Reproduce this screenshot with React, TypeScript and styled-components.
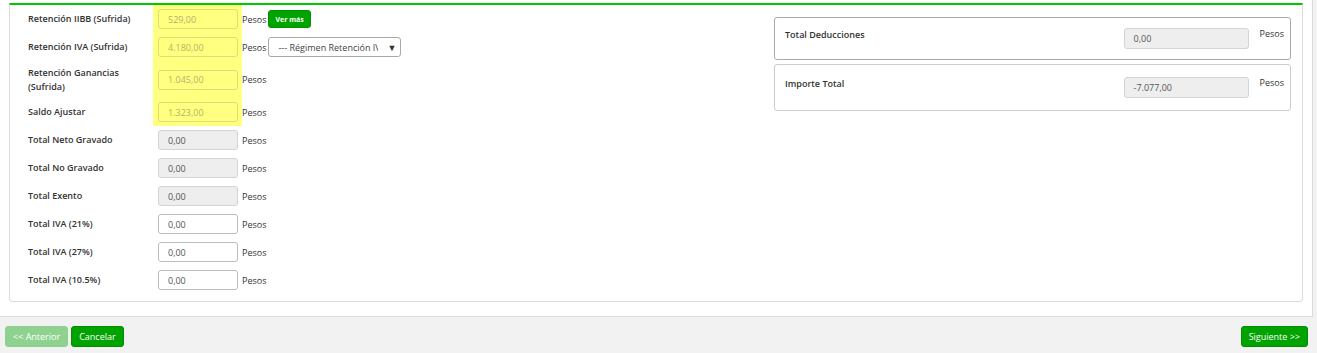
import { createGlobalStyle } from 'styled-components';
import styled from 'styled-components';

type Field = {
    label: string;
    value: string;
    kind: 'marked' | 'readonly' | 'edit';
    tall?: boolean;
    extra?: 'more' | 'regimen';
};

const fields: Field[] = [
    { label: 'Retención IIBB (Sufrida)', value: '529,00', kind: 'marked', extra: 'more' },
    { label: 'Retención IVA (Sufrida)', value: '4.180,00', kind: 'marked', extra: 'regimen' },
    { label: 'Retención Ganancias (Sufrida)', value: '1.045,00', kind: 'marked', tall: true },
    { label: 'Saldo Ajustar', value: '1.323,00', kind: 'marked' },
    { label: 'Total Neto Gravado', value: '0,00', kind: 'readonly' },
    { label: 'Total No Gravado', value: '0,00', kind: 'readonly' },
    { label: 'Total Exento', value: '0,00', kind: 'readonly' },
    { label: 'Total IVA (21%)', value: '0,00', kind: 'edit' },
    { label: 'Total IVA (27%)', value: '0,00', kind: 'edit' },
    { label: 'Total IVA (10.5%)', value: '0,00', kind: 'edit' },
];

const totals = [
    { label: 'Total Deducciones', value: '0,00', active: true },
    { label: 'Importe Total', value: '-7.077,00', active: false },
];

export default function App(): JSX.Element {
    return (
        <>
            <GlobalStyle />
            <Page>
                <Sheet>
                    <Panel>
                        <LeftColumn>
                            {fields.map((field) => (
                                <Row key={field.label} tall={field.tall}>
                                    <Label>{field.label}</Label>
                                    <InputCell marked={field.kind === 'marked'}>
                                        <Input kind={field.kind}>{field.value}</Input>
                                    </InputCell>
                                    <Unit>Pesos</Unit>
                                    {field.extra === 'more' && <SmallButton>Ver más</SmallButton>}
                                    {field.extra === 'regimen' && (
                                        <FakeSelect>
                                            <SelectText>--- Régimen Retención IV</SelectText>
                                            <SelectArrow>▼</SelectArrow>
                                        </FakeSelect>
                                    )}
                                </Row>
                            ))}
                        </LeftColumn>
                        <RightColumn>
                            {totals.map((t) => (
                                <TotalBox key={t.label} active={t.active}>
                                    <TotalLabel>{t.label}</TotalLabel>
                                    <TotalInput>{t.value}</TotalInput>
                                    <TotalUnit>Pesos</TotalUnit>
                                </TotalBox>
                            ))}
                        </RightColumn>
                    </Panel>
                </Sheet>
                <Footer>
                    <NavGroup>
                        <NavButton disabled>&lt;&lt; Anterior</NavButton>
                        <NavButton>Cancelar</NavButton>
                    </NavGroup>
                    <NavButton>Siguiente &gt;&gt;</NavButton>
                </Footer>
            </Page>
        </>
    );
}

const GlobalStyle = createGlobalStyle`
    body {
        margin: 0;
        background: #f1f2f1;
        font-family: "Open Sans", "Liberation Sans", sans-serif;
        color: #333;
    }
`;

const Page = styled.div`
    width: 1317px;
    height: 353px;
    background: #f1f2f1;
`;

const Sheet = styled.div`
    background: #fff;
    width: 1313px;
    height: 317px;
    box-sizing: border-box;
    border-right: 1px solid #dcdcdc;
    border-bottom: 1px solid #dcdcdc;
    padding: 3px 0 0 9px;
`;

const Panel = styled.div`
    width: 1294px;
    box-sizing: border-box;
    border: 1px solid #dcdcdc;
    border-top: 2px solid #00c800;
    border-radius: 0 0 4px 4px;
    padding: 0 11px 7px 18px;
    display: grid;
    grid-template-columns: 1fr 517px;
    align-items: start;
`;

const LeftColumn = styled.div`
    display: flex;
    flex-direction: column;
`;

const Row = styled.div<{ tall?: boolean }>`
    display: flex;
    align-items: center;
    height: ${(props) => (props.tall ? '37px' : '28px')};
`;

const Label = styled.div`
    width: 125px;
    font-size: 9px;
    font-weight: 600;
    line-height: 14px;
    color: #333;
`;

const InputCell = styled.div<{ marked?: boolean }>`
    align-self: stretch;
    display: flex;
    align-items: center;
    padding: 0 4px 0 5px;
    background: ${(props) => (props.marked ? '#ffff80' : 'transparent')};
`;

const Input = styled.div<{ kind: Field['kind'] }>`
    width: 80px;
    height: 20px;
    box-sizing: border-box;
    padding: 0 9px;
    display: flex;
    align-items: center;
    font-size: 9px;
    border-radius: 3px;
    border: 1px solid
        ${(props) => (props.kind === 'marked' ? '#dede76' : props.kind === 'readonly' ? '#d4d4d4' : '#bdbdbd')};
    background: ${(props) =>
        props.kind === 'marked' ? '#ffff80' : props.kind === 'readonly' ? '#eeeeee' : '#fff'};
    color: ${(props) => (props.kind === 'marked' ? '#b3b36a' : '#555')};
`;

const Unit = styled.span`
    font-size: 9px;
    color: #333;
    margin-right: 2px;
`;

const SmallButton = styled.button`
    height: 18px;
    padding: 0 6px;
    border: 1px solid #009300;
    border-radius: 3px;
    background: #00a300;
    color: #fff;
    font-family: inherit;
    font-size: 7px;
    font-weight: 700;
`;

const FakeSelect = styled.div`
    width: 133px;
    height: 20px;
    box-sizing: border-box;
    border: 1px solid #a9a9a9;
    border-radius: 3px;
    display: flex;
    align-items: center;
    padding: 0 4px 0 9px;
    font-size: 9px;
    color: #444;
`;

const SelectText = styled.span`
    width: 100px;
    overflow: hidden;
    white-space: nowrap;
`;

const SelectArrow = styled.span`
    margin-left: auto;
    font-size: 9px;
    color: #333;
`;

const RightColumn = styled.div`
    display: flex;
    flex-direction: column;
    gap: 4px;
    margin-top: 12px;
`;

const TotalBox = styled.div<{ active?: boolean }>`
    display: flex;
    align-items: flex-start;
    border: 1px solid ${(props) => (props.active ? '#aaaaaa' : '#cccccc')};
    border-radius: 3px;
    padding: ${(props) => (props.active ? '10px 6px 10px 10px' : '12px 6px 12px 10px')};
`;

const TotalLabel = styled.div`
    flex: 1;
    font-size: 9px;
    font-weight: 600;
    line-height: 14px;
`;

const TotalInput = styled.div`
    width: 125px;
    height: 21px;
    box-sizing: border-box;
    border: 1px solid #d4d4d4;
    border-radius: 3px;
    background: #eee;
    padding: 0 9px;
    display: flex;
    align-items: center;
    font-size: 9px;
    color: #555;
`;

const TotalUnit = styled.span`
    margin-left: 11px;
    font-size: 9px;
    line-height: 12px;
`;

const Footer = styled.div`
    display: flex;
    justify-content: space-between;
    padding: 9px 9px 0 5px;
`;

const NavGroup = styled.div`
    display: flex;
    gap: 3px;
`;

const NavButton = styled.button`
    height: 21px;
    padding: 0 7px;
    border-radius: 3px;
    border: 1px solid ${(props) => (props.disabled ? '#8fd08f' : '#008f00')};
    background: ${(props) => (props.disabled ? '#8fd28f' : '#00a300')};
    color: #fff;
    font-family: inherit;
    font-size: 9px;
`;
